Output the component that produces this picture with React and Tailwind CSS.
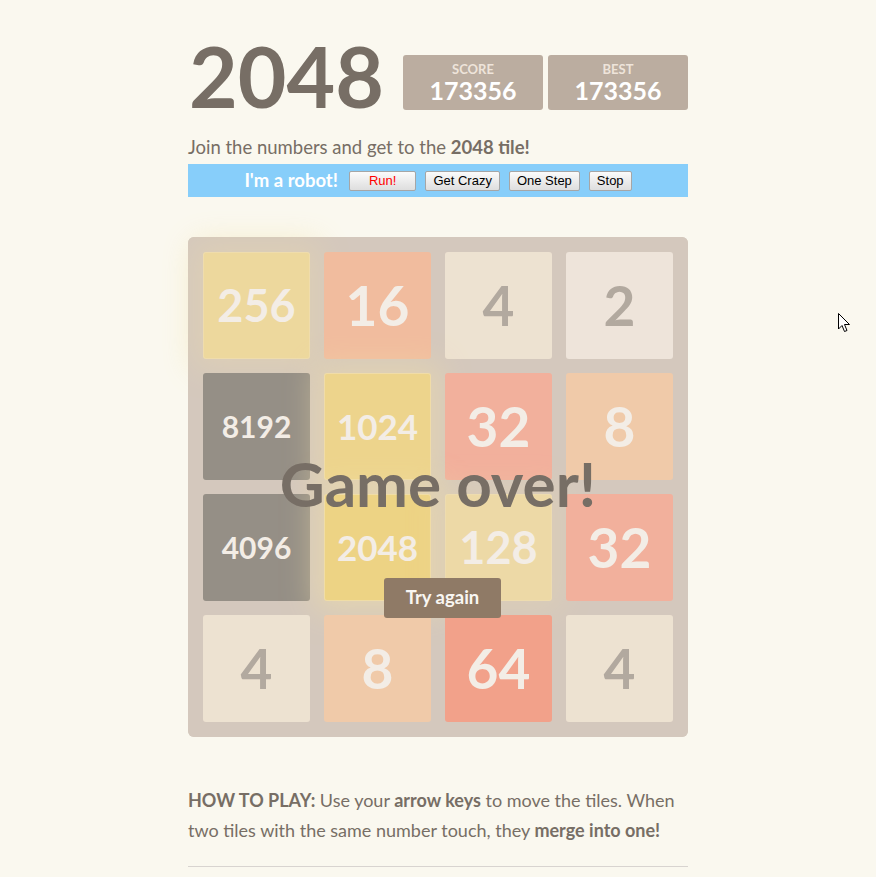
import React from 'react';

const font = "font-['Lato','Open_Sans',sans-serif]";

const tiles = [
  { v: 256, cls: 'bg-[#edcc61] text-[#f9f6f2] text-[45px] shadow-[0_0_30px_10px_rgba(243,215,116,0.31746),inset_0_0_0_1px_rgba(255,255,255,0.19048)]' },
  { v: 16, cls: 'bg-[#f59563] text-[#f9f6f2] text-[55px]' },
  { v: 4, cls: 'bg-[#ede0c8] text-[#776e65] text-[55px]' },
  { v: 2, cls: 'bg-[#eee4da] text-[#776e65] text-[55px]' },
  { v: 8192, cls: 'bg-[#3c3a32] text-[#f9f6f2] text-[30px]' },
  { v: 1024, cls: 'bg-[#edc53f] text-[#f9f6f2] text-[35px] shadow-[0_0_30px_10px_rgba(243,215,116,0.47619),inset_0_0_0_1px_rgba(255,255,255,0.28571)]' },
  { v: 32, cls: 'bg-[#f67c5f] text-[#f9f6f2] text-[55px]' },
  { v: 8, cls: 'bg-[#f2b179] text-[#f9f6f2] text-[55px]' },
  { v: 4096, cls: 'bg-[#3c3a32] text-[#f9f6f2] text-[30px]' },
  { v: 2048, cls: 'bg-[#edc22e] text-[#f9f6f2] text-[35px] shadow-[0_0_30px_10px_rgba(243,215,116,0.55556),inset_0_0_0_1px_rgba(255,255,255,0.33333)]' },
  { v: 128, cls: 'bg-[#edcf72] text-[#f9f6f2] text-[45px] shadow-[0_0_30px_10px_rgba(243,215,116,0.2381),inset_0_0_0_1px_rgba(255,255,255,0.14286)]' },
  { v: 32, cls: 'bg-[#f67c5f] text-[#f9f6f2] text-[55px]' },
  { v: 4, cls: 'bg-[#ede0c8] text-[#776e65] text-[55px]' },
  { v: 8, cls: 'bg-[#f2b179] text-[#f9f6f2] text-[55px]' },
  { v: 64, cls: 'bg-[#f65e3b] text-[#f9f6f2] text-[55px]' },
  { v: 4, cls: 'bg-[#ede0c8] text-[#776e65] text-[55px]' },
];

function ScoreBox({ label, value }) {
  return (
    <div className="w-[140px] h-[55px] bg-[#bbada0] rounded-[3px] flex flex-col items-center pt-[7px]">
      <span className="text-[13px] leading-[14px] text-[#eee4da] font-bold uppercase">{label}</span>
      <span className="text-[25px] leading-[28px] text-white font-bold">{value}</span>
    </div>
  );
}

function RobotButton({ children, red }) {
  return (
    <button
      className={`h-[20px] px-[7px] text-[13px] leading-none font-['Liberation_Sans',Arial,sans-serif] border border-[#a6a6a6] rounded-[2px] bg-gradient-to-b from-[#fbfbfb] to-[#dedede] ${red ? 'text-[#ff0000]' : 'text-black'}`}
    >
      {children}
    </button>
  );
}

export default function App() {
  return (
    <div className={`min-h-[877px] bg-[#faf8ef] text-[#776e65] ${font} relative overflow-hidden`}>
      <div className="w-[500px] mx-auto pt-[36px]">
        {/* header */}
        <div className="flex justify-between items-start">
          <h1 className="text-[84px] leading-[80px] font-bold m-0 pl-[1px]">2048</h1>
          <div className="flex gap-[5px] mt-[19px]">
            <ScoreBox label="Score" value="173356" />
            <ScoreBox label="Best" value="173356" />
          </div>
        </div>

        <p className="mt-[16px] text-[18.5px] leading-[30px]">
          Join the numbers and get to the <b>2048 tile!</b>
        </p>

        {/* bot controls */}
        <div className="mt-[2px] h-[33px] bg-[#87cefa] flex items-center justify-center gap-[9px]">
          <span className="text-white font-bold text-[18.5px] mr-[2px]">I'm a robot!</span>
          <RobotButton red>
            <span className="px-[12px]">Run!</span>
          </RobotButton>
          <RobotButton>Get Crazy</RobotButton>
          <RobotButton>One Step</RobotButton>
          <RobotButton>Stop</RobotButton>
        </div>

        {/* board */}
        <div className="relative mt-[40px] w-[500px] h-[500px] bg-[#bbada0] rounded-[6px] p-[15px]">
          <div className="grid grid-cols-4 gap-[14px]">
            {tiles.map((t, i) => (
              <div
                key={i}
                className={`h-[107px] rounded-[3px] flex items-center justify-center font-bold ${t.cls}`}
              >
                {t.v}
              </div>
            ))}
          </div>
          <div className="absolute inset-0 rounded-[6px] bg-[rgba(238,228,218,0.5)] flex flex-col items-center">
            <p className="mt-[216px] h-[60px] text-[62px] leading-[60px] font-bold">Game over!</p>
            <button className="mt-[65px] ml-[9px] h-[40px] px-[22px] rounded-[3px] bg-[#8f7a66] text-[#f9f6f2] text-[18.5px] font-bold">
              Try again
            </button>
          </div>
        </div>

        <p className="mt-[48px] text-[18px] leading-[30px]">
          <b>HOW TO PLAY:</b> Use your <b>arrow keys</b> to move the tiles. When two tiles with the same number touch, they <b>merge into one!</b>
        </p>
        <hr className="mt-[21px] border-0 border-t border-[#d8d4d0]" />
      </div>

      {/* mouse pointer */}
      <svg className="absolute left-[838px] top-[313px]" width="13" height="20" viewBox="0 0 13 20">
        <path d="M0.5 0.5 L0.5 16 L4 12.5 L6.5 18.5 L9 17.5 L6.5 11.5 L11.5 11.5 Z" fill="#fff" stroke="#000" strokeWidth="1" strokeLinejoin="miter" />
      </svg>
    </div>
  );
}
